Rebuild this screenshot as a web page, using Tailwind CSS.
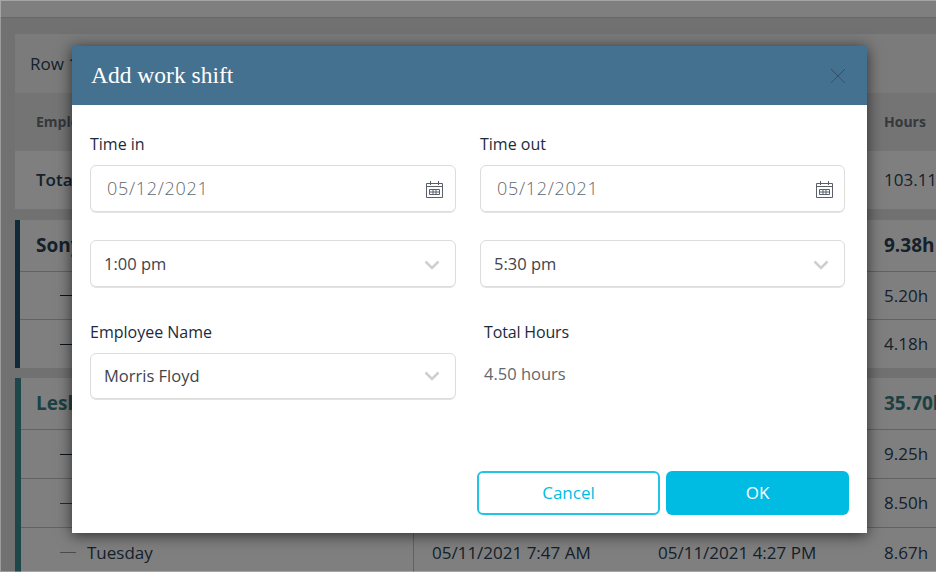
<!DOCTYPE html>
<html lang="en">
<head>
    <meta charset="UTF-8">
    <meta name="viewport" content="width=device-width, initial-scale=1.0">
    <title>Add work shift</title>
    <script src="https://cdn.jsdelivr.net/npm/@tailwindcss/browser@4"></script>
</head>
<body class="font-['Open_Sans',sans-serif] text-[#2b4257]">
<div class="relative w-[936px] h-[572px] overflow-hidden bg-[#e2e2e2]">
    <!-- page behind the dialog -->
    <div class="h-[18px] bg-white border-b border-[#d0d0d0]"></div>
    <div class="pl-[15px] pt-4">
        <div class="bg-[#f6f6f6] h-[59px] flex items-center pl-[15px] text-[17px]">Row 1</div>
        <div class="bg-[#e8e8e8] h-[58px] grid grid-cols-[869px_1fr] items-center text-sm font-bold text-[#6a7178]">
            <span class="pl-[21px]">Employee</span><span>Hours</span>
        </div>
        <div class="bg-white h-[58px] grid grid-cols-[869px_1fr] items-center text-[17px]">
            <span class="pl-[21px] font-semibold">Total</span><span>103.11h</span>
        </div>
        <div class="mt-[11px] border-l-[5px] border-[#1e5470] bg-white">
            <div class="h-[52px] grid grid-cols-[864px_1fr] items-center text-[19px] font-bold border-b border-[#c4c4c4]">
                <span class="pl-4">Sonya</span><span>9.38h</span>
            </div>
            <div class="h-[48px] grid grid-cols-[864px_1fr] items-center text-[17px] border-b border-[#c4c4c4]">
                <span class="pl-10 flex items-center"><i class="block w-4 h-px bg-[#12283a]"></i></span><span>5.20h</span>
            </div>
            <div class="h-[48px] grid grid-cols-[864px_1fr] items-center text-[17px]">
                <span class="pl-10 flex items-center"><i class="block w-4 h-px bg-[#12283a]"></i></span><span>4.18h</span>
            </div>
        </div>
        <div class="mt-[10px] border-l-[6px] border-[#3b8f90] bg-white">
            <div class="h-[52px] grid grid-cols-[863px_1fr] items-center text-[19px] font-bold text-[#3a8284] border-b border-[#c4c4c4]">
                <span class="pl-[15px]">Leslie</span><span>35.70h</span>
            </div>
            <div class="h-[49px] grid grid-cols-[863px_1fr] items-center text-[17px] border-b border-[#c4c4c4]">
                <span class="pl-[39px] flex items-center"><i class="block w-4 h-px bg-[#12283a]"></i></span><span>9.25h</span>
            </div>
            <div class="h-[49px] grid grid-cols-[863px_1fr] items-center text-[17px] border-b border-[#c4c4c4]">
                <span class="pl-[39px] flex items-center"><i class="block w-4 h-px bg-[#555555]"></i></span><span>8.50h</span>
            </div>
            <div class="h-[50px] grid grid-cols-[393px_226px_244px_1fr] items-center text-[17px] leading-none pb-0.5">
                <span class="pl-[39px] flex items-center gap-[11px] h-full border-r border-[#c4c4c4]"><i class="block w-4 h-px bg-[#999999]"></i>Tuesday</span>
                <span class="pl-[18px]">05/11/2021 7:47 AM</span>
                <span class="pl-[18px]">05/11/2021 4:27 PM</span>
                <span>8.67h</span>
            </div>
        </div>
    </div>

    <div class="absolute inset-0 bg-black/50 border-l border-t border-b border-white/30"></div>

    <!-- dialog -->
    <div class="absolute left-[72px] top-[46px] w-[795px] h-[487px] bg-white text-[#1c2b3a] shadow-[0_2px_14px_rgba(0,0,0,0.65)]">
        <div class="h-[59px] bg-[#457190] flex items-center justify-between pl-[19px] pr-[21px]">
            <h2 class="font-['Liberation_Serif',serif] text-[23.5px] text-white">Add work shift</h2>
            <svg width="16" height="16" viewBox="0 0 16 16" fill="none" stroke="#2b3f4f" stroke-width="1" stroke-dasharray="1 0.5"><path d="M1 1l14 14M15 1L1 15"/></svg>
        </div>
        <div class="grid grid-cols-[366px_365px] gap-x-6 pl-[18px] pt-[28px]">
            <div>
                <label class="block text-base leading-[22px] mb-[10px]">Time in</label>
                <div class="h-[47px] flex items-center justify-between pl-4 pr-3 border border-[#dcdcdc] shadow-[0_1px_0_#e4e4e4] rounded-md text-lg font-light tracking-[0.7px] text-[#63686e]">
                    <span class="-mt-0.5">05/12/2021</span>
                    <svg width="17" height="18" viewBox="0 0 17 18" fill="none" stroke="#59606a"><path d="M.5 3.5h16v14H.5zM.5 6.5h16M4.5 1v4M12.5 1v4M3.5 9.5h10v5h-10zM3.5 12h10M7 9.5v5M10 9.5v5"/></svg>
                </div>
            </div>
            <div>
                <label class="block text-base leading-[22px] mb-[10px]">Time out</label>
                <div class="h-[47px] flex items-center justify-between pl-4 pr-[11px] border border-[#dcdcdc] shadow-[0_1px_0_#e4e4e4] rounded-md text-lg font-light tracking-[0.7px] text-[#63686e]">
                    <span class="-mt-0.5">05/12/2021</span>
                    <svg width="17" height="18" viewBox="0 0 17 18" fill="none" stroke="#59606a"><path d="M.5 3.5h16v14H.5zM.5 6.5h16M4.5 1v4M12.5 1v4M3.5 9.5h10v5h-10zM3.5 12h10M7 9.5v5M10 9.5v5"/></svg>
                </div>
            </div>
            <div class="mt-7 h-[47px] flex items-center justify-between pl-[13px] pr-[15px] pt-0.5 border border-[#dcdcdc] shadow-[0_1px_0_#e4e4e4] rounded-md text-[16.5px] text-[#3f444b]">
                1:00 pm
                <svg width="16" height="10" viewBox="0 0 16 10" fill="none" stroke="#cfcfcf" stroke-width="2.5"><path d="M1.5 1.5L8 8l6.5-6.5"/></svg>
            </div>
            <div class="mt-7 h-[47px] flex items-center justify-between pl-[13px] pr-[15px] pt-0.5 border border-[#dcdcdc] shadow-[0_1px_0_#e4e4e4] rounded-md text-[16.5px] text-[#3f444b]">
                5:30 pm
                <svg width="16" height="10" viewBox="0 0 16 10" fill="none" stroke="#cfcfcf" stroke-width="2.5"><path d="M1.5 1.5L8 8l6.5-6.5"/></svg>
            </div>
            <div class="mt-[34px]">
                <label class="block text-base leading-[22px] mb-[10px]">Employee Name</label>
                <div class="h-[46px] flex items-center justify-between pl-[13px] pr-[15px] border border-[#dcdcdc] shadow-[0_1px_0_#e4e4e4] rounded-md text-[16.5px] text-[#3f444b]">
                    Morris Floyd
                    <svg width="16" height="10" viewBox="0 0 16 10" fill="none" stroke="#cfcfcf" stroke-width="2.5"><path d="M1.5 1.5L8 8l6.5-6.5"/></svg>
                </div>
            </div>
            <div class="mt-[34px] pl-1">
                <div class="text-base leading-[22px] tracking-[-0.15px]">Total Hours</div>
                <div class="mt-[19px] text-[16.5px] text-[#63686e]">4.50 hours</div>
            </div>
        </div>
        <div class="absolute left-[405px] top-[425px] flex gap-[6px]">
            <button class="w-[183px] h-[44px] border-2 border-[#22c3e6] rounded-md text-[17px] text-[#00bce3] bg-white">Cancel</button>
            <button class="w-[183px] h-[44px] rounded-md text-[17px] text-white bg-[#00bce3]">OK</button>
        </div>
    </div>
</div>
</body>
</html>
